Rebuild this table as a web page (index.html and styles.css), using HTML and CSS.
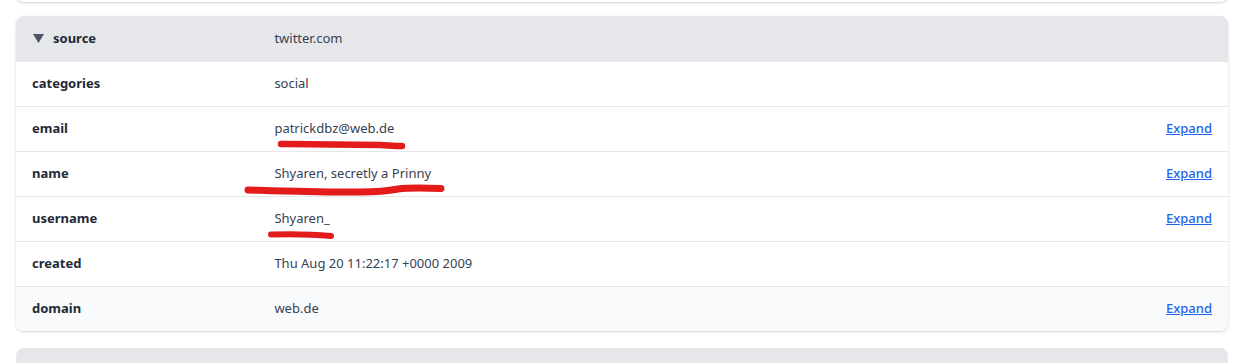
FILE: index.html
```html
<!DOCTYPE html>
<html lang="en">
<head>
    <meta charset="UTF-8">
    <title>Record</title>
    <link rel="stylesheet" href="styles.css">
</head>
<body>
    <div class="card card-prev"></div>

    <div class="card">
        <div class="row row-head">
            <div class="key">
                <svg class="caret" width="11" height="9" viewBox="0 0 11 9"><path d="M0 0H11L5.5 9Z" fill="#4b5563"/></svg>
                source
            </div>
            <div class="val">twitter.com</div>
        </div>
        <div class="row">
            <div class="key">categories</div>
            <div class="val">social</div>
        </div>
        <div class="row">
            <div class="key">email</div>
            <div class="val">patrickdbz@web.de</div>
            <a href="#" class="expand">Expand</a>
        </div>
        <div class="row">
            <div class="key">name</div>
            <div class="val">Shyaren, secretly a Prinny</div>
            <a href="#" class="expand">Expand</a>
        </div>
        <div class="row">
            <div class="key">username</div>
            <div class="val">Shyaren_</div>
            <a href="#" class="expand">Expand</a>
        </div>
        <div class="row">
            <div class="key">created</div>
            <div class="val">Thu Aug 20 11:22:17 +0000 2009</div>
        </div>
        <div class="row row-hover">
            <div class="key">domain</div>
            <div class="val">web.de</div>
            <a href="#" class="expand">Expand</a>
        </div>
    </div>

    <div class="card card-next"></div>

    <!-- marker strokes drawn over the values -->
    <svg class="marks" width="1243" height="363" viewBox="0 0 1243 363">
        <g fill="none" stroke="#e31b1b" stroke-linecap="round" stroke-linejoin="round">
            <path stroke-width="6.5" d="M281 144 C320 144.5 360 144.5 380 145 C390 145.5 396 146 402 146"/>
            <path stroke-width="7" d="M248 190 C280 191 320 192.5 360 192 C378 192 388 191 398 189 C410 187.5 425 188 441 188.5"/>
            <path stroke-width="6" d="M271 234.5 C290 234 315 234.5 331 236"/>
        </g>
    </svg>
</body>
</html>
```

FILE: styles.css
```css
html {
    overflow: hidden;
}

body {
    margin: 0;
    padding: 0 15px 0 16px;
    background: #fff;
    font-family: 'Noto Sans', sans-serif;
    font-size: 13px;
    color: #374151;
    position: relative;
    height: 363px;
    overflow: hidden;
}

.card {
    background: #fff;
    border-radius: 8px;
    box-shadow: 0 1px 3px rgba(0, 0, 0, 0.12), 0 1px 2px rgba(0, 0, 0, 0.06);
    overflow: hidden;
    margin-bottom: 17px;
}

.card-prev {
    height: 14px;
    margin-top: -12px;
    margin-bottom: 14px;
}

.card-next {
    height: 15px;
    margin-bottom: 0;
    border-radius: 8px 8px 0 0;
    background: #e5e7eb;
    box-shadow: none;
}

.row {
    display: flex;
    align-items: center;
    height: 45px;
    padding-bottom: 2px;
    border-top: 1px solid #e5e7eb;
    box-sizing: border-box;
}

.row-head {
    background: #e5e7eb;
    border-top: none;
}

.row-hover {
    background: #f9fafb;
}

.key {
    display: flex;
    align-items: center;
    width: 20%;
    padding-left: 16px;
    box-sizing: border-box;
    font-weight: bold;
    color: #1f2937;
}

.caret {
    margin: 1px 9px 0 1px;
}

.val {
    flex: 1;
    padding-left: 16px;
}

.expand {
    margin-right: 16px;
    color: #2563eb;
    font-weight: 500;
    text-decoration: underline;
}

.marks {
    position: absolute;
    left: 0;
    top: 0;
    pointer-events: none;
}
```
